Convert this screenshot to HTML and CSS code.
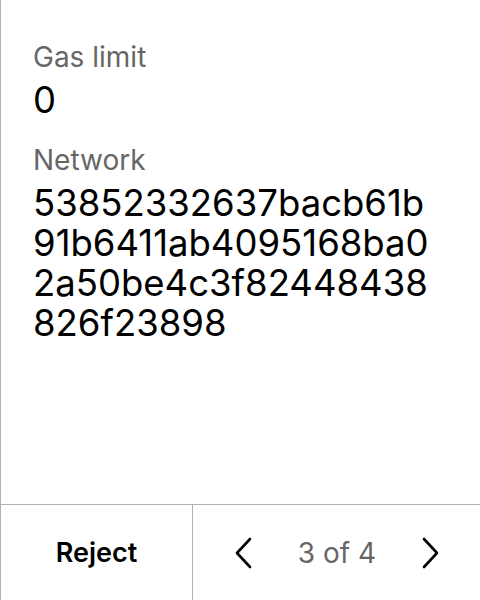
FILE: index.html
```html
<!DOCTYPE html>
<html>
<head>
<meta charset="utf-8">
<link rel="stylesheet" href="styles.css">
</head>
<body>
<div class="screen">
  <div class="content">
    <div class="field">
      <div class="label">Gas limit</div>
      <div class="value">0</div>
    </div>
    <div class="field">
      <div class="label">Network</div>
      <div class="value">53852332637bacb61b<br>91b6411ab4095168ba0<br>2a50be4c3f82448438<br>826f23898</div>
    </div>
  </div>
  <div class="footer">
    <div class="reject">Reject</div>
    <div class="pager">
      <svg class="chev" width="18" height="32" viewBox="0 0 18 32"><path d="M16 2 L3 16 L16 30" fill="none" stroke="#000" stroke-width="2.6" stroke-linecap="round" stroke-linejoin="round"/></svg>
      <span class="count">3 of 4</span>
      <svg class="chev" width="18" height="32" viewBox="0 0 18 32"><path d="M2 2 L15 16 L2 30" fill="none" stroke="#000" stroke-width="2.6" stroke-linecap="round" stroke-linejoin="round"/></svg>
    </div>
  </div>
</div>
</body>
</html>
```
FILE: styles.css
```css
html, body {
  margin: 0;
  padding: 0;
  background: #fff;
}
body {
  font-family: Inter, "Noto Sans", sans-serif;
}
.screen {
  height: 600px;
  box-sizing: border-box;
  border-left: 1px solid #b0b0b0;
  display: flex;
  flex-direction: column;
}
.content {
  flex: 1;
  padding: 41px 20px 0 32px;
  display: flex;
  flex-direction: column;
  gap: 24px;
}
.field {
  display: flex;
  flex-direction: column;
  gap: 7px;
}
.label {
  font-size: 28px;
  line-height: 32px;
  color: #666;
}
.value {
  font-size: 36.5px;
  line-height: 40px;
  color: #000;
  word-break: break-all;
}
.footer {
  height: 96px;
  box-sizing: border-box;
  border-top: 1px solid #b0b0b0;
  display: flex;
}
.reject {
  width: 191px;
  border-right: 1px solid #b0b0b0;
  display: flex;
  align-items: center;
  justify-content: center;
  font-size: 27px;
  font-weight: 600;
  color: #000;
}
.pager {
  flex: 1;
  display: flex;
  align-items: center;
  justify-content: space-between;
  padding: 0 40px 0 41px;
}
.count {
  font-size: 28px;
  color: #666;
}
.chev {
  display: block;
}
```
